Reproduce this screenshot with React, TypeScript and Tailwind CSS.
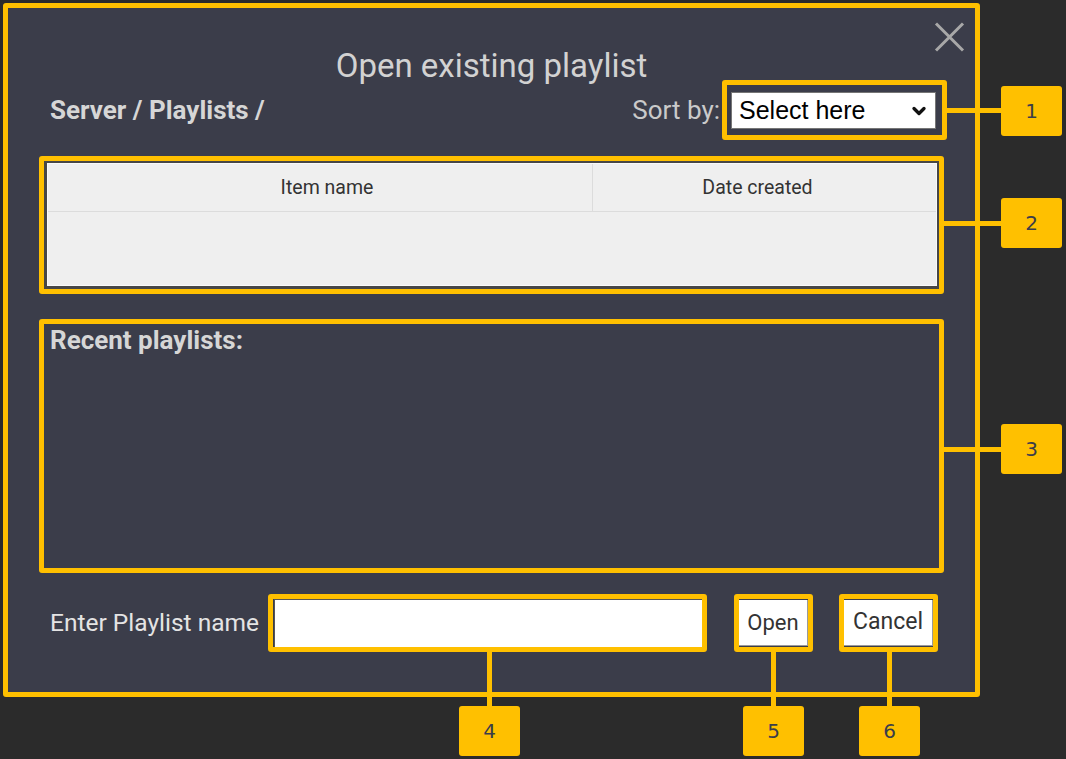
import { ChevronDown } from "lucide-react";

const callouts = [
  { n: "1", box: "left-[1001px] top-[86px]", line: "left-[946px] top-[108px] h-[5px] w-[56px]" },
  { n: "2", box: "left-[1001px] top-[198px]", line: "left-[943px] top-[221px] h-[5px] w-[59px]" },
  { n: "3", box: "left-[1001px] top-[424px]", line: "left-[943px] top-[447px] h-[5px] w-[59px]" },
  { n: "4", box: "left-[459px] top-[706px]", line: "left-[487px] top-[651px] h-[56px] w-[5px]" },
  { n: "5", box: "left-[743px] top-[706px]", line: "left-[771px] top-[651px] h-[56px] w-[5px]" },
  { n: "6", box: "left-[859px] top-[706px]", line: "left-[887px] top-[651px] h-[56px] w-[5px]" },
];

function CloseIcon() {
  return (
    <svg width="31" height="30" viewBox="0 0 31 30" fill="none">
      <path d="M2 1.5 L29 28.5 M29 1.5 L2 28.5" stroke="#a8a8a8" strokeWidth="3" />
    </svg>
  );
}

export default function App() {
  return (
    <div className="relative h-[759px] w-[1066px] overflow-hidden bg-[#2b2b2b] pl-[3px] pt-[3px] font-['Roboto','Liberation_Sans',sans-serif]">
      <div className="relative h-[694px] w-[977px] rounded-[3px] border-[5px] border-[#ffc000] bg-[#3b3d4a] px-[31px] pt-[44px]">
        <button className="absolute right-[10px] top-[14px]">
          <CloseIcon />
        </button>

        <h1 className="text-center text-[33px] leading-[28px] text-[#d2d2d2]">
          Open existing playlist
        </h1>

        <div className="flex h-[60px] items-center justify-between">
          <div className="pl-[11px] text-[26px] font-bold text-[#d6d6d6]">
            Server / Playlists /
          </div>
          <div className="-mr-[3px] flex items-center gap-[2px]">
            <span className="text-[26px] text-[#cacaca]">Sort by:</span>
            <div className="h-[60px] w-[225px] rounded-[3px] border-[5px] border-[#ffc000] pb-[6px] pl-[4px] pr-[6px] pt-[7px]">
              <div className="flex h-[37px] items-center justify-between border border-[#767676] bg-white pl-[7px] pr-[6px] font-['Liberation_Sans',sans-serif] text-[25px] text-black">
                <span>Select here</span>
                <ChevronDown size={20} strokeWidth={4} color="#111" />
              </div>
            </div>
          </div>
        </div>

        <div className="mt-[16px] h-[138px] rounded-[3px] border-[5px] border-[#ffc000] bg-[#474747] p-[3px] pr-[2px] pt-[2px]">
          <div className="flex h-full flex-col border border-[#fafafa] bg-[#efefef] text-[19.5px] text-[#333]">
            <div className="flex h-[48px] border-b border-[#dcdcdc]">
              <div className="flex w-[545px] items-center justify-center border-r border-[#dcdcdc] pl-[14px]">
                Item name
              </div>
              <div className="flex flex-1 items-center justify-center pr-[14px]">Date created</div>
            </div>
            <div className="flex-1" />
          </div>
        </div>

        <div className="mt-[25px] h-[254px] rounded-[3px] border-[5px] border-[#ffc000] pl-[6px] pt-[1px]">
          <div className="text-[26px] font-bold leading-[30px] text-[#d6d6d6]">
            Recent playlists:
          </div>
        </div>

        <div className="mt-[21px] flex h-[58px] items-center">
          <span className="w-[229px] pl-[11px] text-[24.5px] text-[#e4e4e4]">Enter Playlist name</span>
          <div className="h-[58px] w-[439px] rounded-[3px] border-[5px] border-[#ffc000] pl-[1px]">
            <input
              className="h-full w-full border-l border-t border-[#555] bg-white outline-none"
              type="text"
            />
          </div>
          <div className="ml-[27px] h-[58px] w-[79px] rounded-[3px] border-[5px] border-[#ffc000] pt-[1px]">
            <button className="h-[46px] w-full border-b border-r border-[#9a9a9a] bg-white text-[22px] text-[#333]">
              Open
            </button>
          </div>
          <div className="ml-[26px] h-[58px] w-[99px] rounded-[3px] border-[5px] border-[#ffc000] pt-[1px]">
            <button className="h-[46px] w-full border-b border-r border-[#9a9a9a] bg-white text-[23px] text-[#333]">
              Cancel
            </button>
          </div>
        </div>
      </div>

      {callouts.map((c) => (
        <div key={c.n}>
          <div className={`absolute bg-[#ffc000] ${c.line}`} />
          <div
            className={`absolute flex h-[50px] w-[61px] items-center justify-center rounded-[3px] bg-[#ffc000] font-['DejaVu_Sans',sans-serif] text-[20px] text-[#3b3d4a] ${c.box}`}
          >
            {c.n}
          </div>
        </div>
      ))}
    </div>
  );
}
